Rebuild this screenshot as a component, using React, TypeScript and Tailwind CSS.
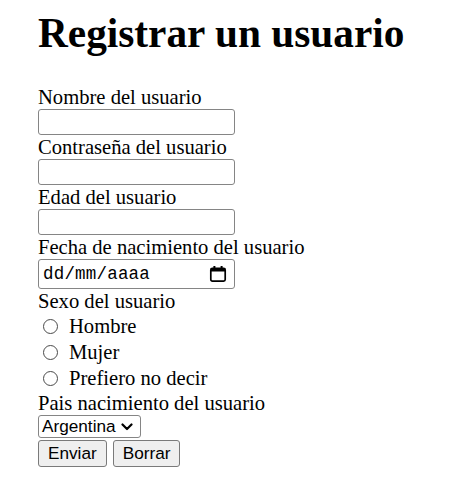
import React from 'react';

const serif = "font-['Liberation_Serif','Times_New_Roman',serif]";
const sans = "font-['Liberation_Sans',Arial,sans-serif]";

const Field: React.FC<{ label: string; type?: string }> = ({ label, type = 'text' }) => (
  <div className="flex flex-col">
    <label className="h-[24px] leading-[24px]">{label}</label>
    <input
      type={type}
      className="w-[197px] h-[26px] border border-[#858585] rounded-[3px] bg-white px-[3px] text-[17px]"
    />
  </div>
);

const Radio: React.FC<{ label: string }> = ({ label }) => (
  <label className="flex items-center h-[26px]">
    <input
      type="radio"
      name="sexo"
      className="appearance-none w-[15px] h-[15px] ml-[5px] mr-[11px] rounded-full border border-[#4a4a4a] bg-white"
    />
    <span>{label}</span>
  </label>
);

export default function App() {
  return (
    <div className={`${serif} text-black bg-white min-h-[491px] pl-[38px] pt-[10px] text-[20.6px]`}>
      <h1 className="text-[41.3px] font-bold h-[47px] leading-[47px]">Registrar un usuario</h1>

      <form className="flex flex-col mt-[28px]">
        <Field label="Nombre del usuario" />
        <Field label="Contraseña del usuario" type="password" />
        <Field label="Edad del usuario" />

        <div className="flex flex-col">
          <label className="h-[24px] leading-[24px]">Fecha de nacimiento del usuario</label>
          <div className="w-[197px] h-[30px] border border-[#858585] rounded-[3px] bg-white flex items-center justify-between pl-[4px] pr-[7px]">
            <span className="font-['Liberation_Mono','Courier_New',monospace] text-[17.5px] tracking-[0.2px]">dd/mm/aaaa</span>
            <svg width="18" height="18" viewBox="0 0 18 18" fill="none">
              <rect x="1.8" y="3.3" width="14.4" height="12.9" rx="1.6" stroke="black" strokeWidth="1.7" />
              <rect x="1.8" y="3.3" width="14.4" height="3.2" fill="black" />
              <rect x="4.4" y="1" width="2" height="3" fill="black" />
              <rect x="11.6" y="1" width="2" height="3" fill="black" />
            </svg>
          </div>
        </div>

        <label className="h-[24px] leading-[24px]">Sexo del usuario</label>
        <Radio label="Hombre" />
        <Radio label="Mujer" />
        <Radio label="Prefiero no decir" />

        <label className="h-[24px] leading-[24px]">Pais nacimiento del usuario</label>
        <div className={`${sans} text-[17.2px] w-[103px] h-[23px] border border-[#858585] rounded-[3px] bg-white flex items-center justify-between pl-[3px] pr-[7px]`}>
          <span>Argentina</span>
          <svg width="12" height="8" viewBox="0 0 12 8" fill="none">
            <polyline points="1.5,1.5 6,6 10.5,1.5" stroke="black" strokeWidth="2.2" strokeLinecap="round" strokeLinejoin="round" />
          </svg>
        </div>

        <div className={`${sans} text-[17.2px] flex gap-[6px] mt-[2px]`}>
          <button type="submit" className="h-[27px] px-[9px] border border-[#7a7a7a] rounded-[3px] bg-[#efefef]">Enviar</button>
          <button type="reset" className="h-[27px] px-[9px] border border-[#7a7a7a] rounded-[3px] bg-[#efefef]">Borrar</button>
        </div>
      </form>
    </div>
  );
}
